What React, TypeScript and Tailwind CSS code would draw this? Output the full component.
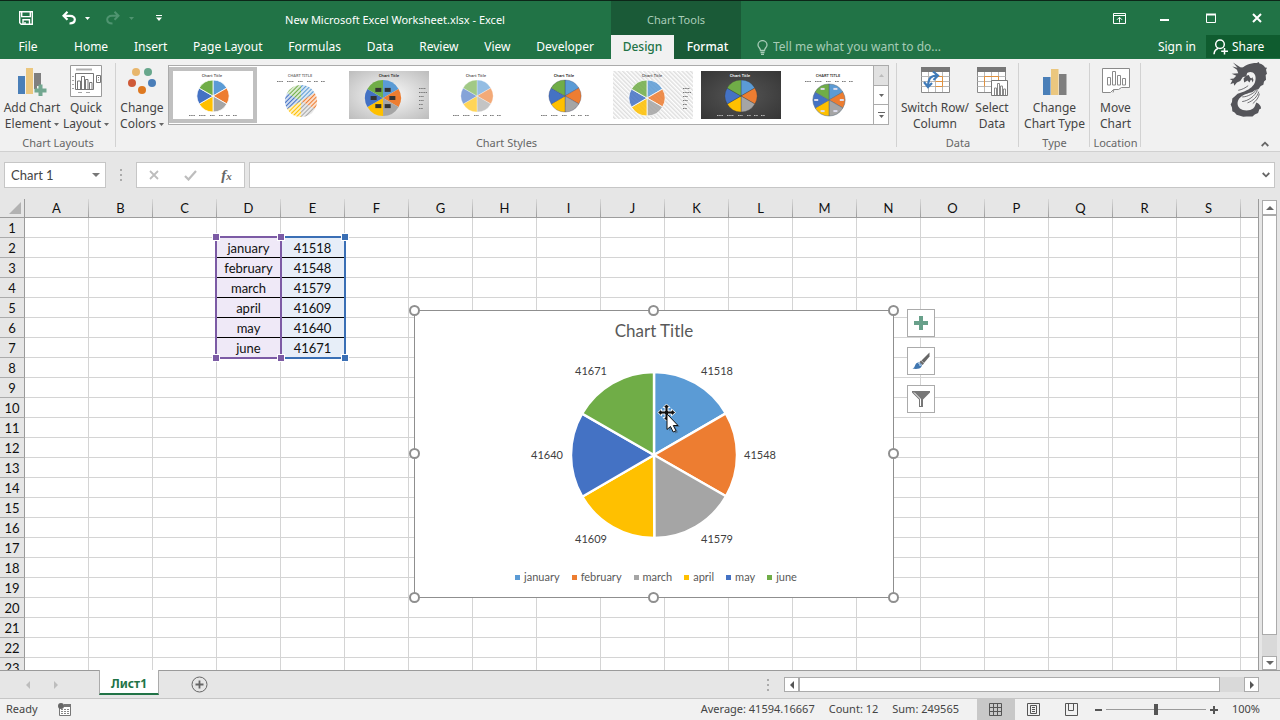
import React from 'react';
import clsx from 'clsx';

const columns = 'ABCDEFGHIJKLMNOPQRS'.split('');
const rows = Array.from({ length: 23 }, (_, i) => i + 1);

const data = [
  { month: 'january', value: 41518, color: '#5b9bd5' },
  { month: 'february', value: 41548, color: '#ed7d31' },
  { month: 'march', value: 41579, color: '#a5a5a5' },
  { month: 'april', value: 41609, color: '#ffc000' },
  { month: 'may', value: 41640, color: '#4472c4' },
  { month: 'june', value: 41671, color: '#70ad47' },
];

const tabs = ['Home', 'Insert', 'Page Layout', 'Formulas', 'Data', 'Review', 'View', 'Developer'];

// Slice path for one of the data points
const slicePath = (index: number, cx: number, cy: number, r: number) => {
  const total = data.reduce((sum, d) => sum + d.value, 0);
  const before = data.slice(0, index).reduce((sum, d) => sum + d.value, 0);
  const from = (before / total) * Math.PI * 2;
  const to = ((before + data[index].value) / total) * Math.PI * 2;
  const point = (a: number) => `${(cx + r * Math.sin(a)).toFixed(2)} ${(cy - r * Math.cos(a)).toFixed(2)}`;
  return `M${cx} ${cy}L${point(from)}A${r} ${r} 0 0 1 ${point(to)}Z`;
};

type PieProps = { cx: number; cy: number; r: number; gap: number; stroke?: string; opacity?: number; fills?: string[] };

const Pie: React.FC<PieProps> = ({ cx, cy, r, gap, stroke = '#fff', opacity = 1, fills }) => (
  <g opacity={opacity}>
    {data.map((d, i) => (
      <path key={d.month} d={slicePath(i, cx, cy, r)} fill={fills ? fills[i] : d.color} stroke={stroke} strokeWidth={gap} />
    ))}
  </g>
);

/* ---------- Title bar ---------- */

const Caret: React.FC<{ className?: string }> = ({ className }) => (
  <svg viewBox="0 0 5 3" className={clsx('w-[5px] h-[3px]', className)} aria-hidden="true">
    <path d="M0 0h5L2.500 3z" fill="currentColor" />
  </svg>
);

const TitleBar: React.FC = () => (
  <header className="flex h-[35px] border-t border-[#0c2618] bg-[#217346] text-white">
    <div className="flex w-[611px]">
      <div className="flex w-[179px] items-center pl-[19px]">
        <button aria-label="Save" className="mr-[29px]">
          <svg viewBox="0 0 14 14" className="w-3.5 h-3.5" fill="none" stroke="currentColor" strokeWidth="1.4">
            <path d="M.7.7h12.600v12.600H2.200L.7 11.800z" />
            <path d="M2.700 1v4.600h8.600V1M4 13V8.800h6.500V13M6 13v-2" />
          </svg>
        </button>
        <button aria-label="Undo" className="mr-[9px]">
          <svg viewBox="0 0 14 14" className="w-3.5 h-3.5" fill="none" stroke="currentColor" strokeWidth="2.200">
            <path d="M5.500.8 1.500 4.800l4 4M2 4.800h6c6.500 0 6.500 7.700-.5 7.700" />
          </svg>
        </button>
        <button aria-label="Undo history" className="mr-4">
          <Caret />
        </button>
        <button aria-label="Redo" className="mr-[9px] text-[#4f9470]">
          <svg viewBox="0 0 14 14" className="w-3.5 h-3.5" fill="none" stroke="currentColor" strokeWidth="2">
            <path d="M8.500.8l4 4-4 4M12 4.800H6c-6.500 0-6.500 7.700.5 7.700" />
          </svg>
        </button>
        <button aria-label="Redo history" className="mr-[22px] text-[#4f9470]">
          <Caret />
        </button>
        <button aria-label="Customize Quick Access Toolbar">
          <svg viewBox="0 0 6 6" className="w-1.5 h-1.5">
            <path d="M0 0h6v1H0zM0 2.500h6L3 6z" fill="currentColor" />
          </svg>
        </button>
      </div>
      <h1 className="flex-1 pt-1 text-center text-[11px] leading-[30px]">New Microsoft Excel Worksheet.xlsx - Excel</h1>
    </div>
    <div className="w-[130px] bg-[#1a5a37] pt-1 text-center text-[11px] leading-[30px] text-[#a9cdb9]">Chart Tools</div>
    <div className="ml-auto flex">
      <button aria-label="Ribbon Display Options" className="flex w-[46px] items-center justify-center">
        <svg viewBox="0 0 13 11" className="w-[13px] h-[11px]" fill="none" stroke="currentColor">
          <path d="M.5.5h12v10H.5zM.5 2.500h12M6.500 9.500V4.500M4 6.800l2.500-2.500L9 6.800" />
        </svg>
      </button>
      <button aria-label="Minimize" className="flex w-[46px] items-center justify-center">
        <svg viewBox="0 0 10 10" className="w-2.5 h-2.5"><path d="M0 6h9v2H0z" fill="currentColor" /></svg>
      </button>
      <button aria-label="Maximize" className="flex w-[46px] items-center justify-center">
        <svg viewBox="0 0 10 10" className="w-2.5 h-2.5"><path d="M.5 1.500h9v8h-9zM0 1h10M0 2h10" fill="none" stroke="currentColor" /></svg>
      </button>
      <button aria-label="Close" className="flex w-[46px] items-center justify-center">
        <svg viewBox="0 0 10 10" className="w-2.5 h-2.5"><path d="M1 1l8 8M9 1L1 9" stroke="currentColor" strokeWidth="2" /></svg>
      </button>
    </div>
  </header>
);

const TabBar: React.FC = () => (
  <nav className="flex h-6 bg-[#217346] text-xs text-white">
    <div className="flex w-[611px]">
      <button className="w-14">File</button>
      <div className="flex flex-1 justify-between pl-[18px] pr-[17px]">
        {tabs.map((tab) => (
          <button key={tab} className="whitespace-nowrap">{tab}</button>
        ))}
      </div>
    </div>
    <div className="flex w-[130px] bg-[#1a5a37]">
      <button className="w-[63px] bg-[#f1f1f1] font-medium text-[#217346]">Design</button>
      <button className="flex-1 font-medium">Format</button>
    </div>
    <label className="flex flex-1 items-center gap-[5px] pl-4 text-[#a6cbb6]">
      <svg viewBox="0 0 11 15" className="w-[11px] h-[15px]" fill="none" stroke="currentColor" strokeWidth="1.300">
        <path d="M3.500 10.500C3.500 8 1 7.500 1 4.900a4.500 4.300 0 0 1 9 0c0 2.600-2.500 3.100-2.500 5.600zM3.500 12.500h4M4 14.300h3" />
      </svg>
      <input aria-label="Tell me" placeholder="Tell me what you want to do..." className="w-52 bg-transparent outline-none placeholder:text-[#a6cbb6]" />
    </label>
    <button className="mr-2.5">Sign in</button>
    <button className="mb-px flex w-[74px] items-center gap-1 bg-[#0f5c2f] pl-[7px]">
      <svg viewBox="0 0 15 16" className="w-[15px] h-4" fill="none" stroke="currentColor" strokeWidth="1.500">
        <circle cx="7" cy="5.200" r="4.300" />
        <path d="M1 15.200c.3-3 2-5 4-5.700M11.500 9v6.500M8.200 12.300H15" />
      </svg>
      Share
    </button>
  </nav>
);

/* ---------- Ribbon ---------- */

const RibbonButton: React.FC<{ icon: React.ReactNode; lines: [string, string]; menu?: boolean; className?: string }> = ({
  icon,
  lines,
  menu,
  className,
}) => (
  <button className={clsx('flex flex-col items-center whitespace-nowrap text-xs leading-4 text-[#444]', className)}>
    <span className="mb-[3px] flex h-8 items-center">{icon}</span>
    <span>{lines[0]}</span>
    <span className="flex items-center gap-[3px]">
      {lines[1]}
      {menu && <Caret className="text-[#666]" />}
    </span>
  </button>
);

const RibbonGroup: React.FC<{ label: string; className?: string; children: React.ReactNode }> = ({ label, className, children }) => (
  <section className={clsx('relative flex flex-col', className)}>
    <div className="flex h-[76px] pt-1.5">{children}</div>
    <h2 className="text-center text-[11px] leading-4 text-[#666]">{label}</h2>
    <span className="absolute right-0 top-1 h-[84px] w-px bg-[#d2d2d2]" />
  </section>
);

const AddElementIcon = () => (
  <svg viewBox="0 0 30 30" className="w-[30px] h-[30px]">
    <path d="M1 10h7v18H1z" fill="#4a7fb8" />
    <path d="M9 2h7v26H9z" fill="#ebc77f" />
    <path d="M17 7h7v13h-4v3h-3z" fill="#7f7f7f" />
    <path d="M21.500 18.500h4v4h4v4h-4v4h-4v-4h-4v-4h4z" fill="#72a790" />
  </svg>
);

const QuickLayoutIcon = () => (
  <svg viewBox="0 0 32 32" className="w-8 h-8" fill="none" stroke="#777">
    <path d="M.5.5h31v31H.5z" fill="#fff" stroke="#9a9a9a" />
    <path d="M6 4.500h16" stroke="#b0b0b0" strokeWidth="2" />
    <path d="M5.500 8.500h18v16h-18zM7.500 24v-8h3v8M11.500 24V11.500h3V24M15.500 24V14.500h2.500V24M19.500 24v-6.500H22V24" />
    <path d="M26.500 10.500h4v7h-4zM28.500 12v1M28.500 14.500v1" />
    <path d="M2 11.500h2M2 15.500h2M2 19.500h2M2 23.500h2M8 27.500h4M16 27.500h4" stroke="#a5a5a5" />
  </svg>
);

const ColorsIcon = () => (
  <svg viewBox="0 0 30 28" className="w-[30px] h-7">
    <circle cx="9" cy="5" r="4" fill="#e8b66c" />
    <circle cx="21" cy="5" r="4" fill="#68a78c" />
    <circle cx="5" cy="16" r="4" fill="#cf5a38" />
    <circle cx="25" cy="16" r="4" fill="#4a7eb8" />
    <circle cx="15" cy="23" r="4" fill="#de7921" />
  </svg>
);

const SheetLines = () => (
  <>
    <path d="M.5 4.500h28v21H.5z" fill="#fff" stroke="#8a8a8a" />
    <path d="M0 0h29v5H0z" fill="#777" />
    <path d="M.5 9.500h28M.5 14.500h28M.5 19.500h28M7.500 5v20M14.500 5v20M21.500 5v20" stroke="#b9b9b9" fill="none" />
  </>
);

const SwitchIcon = () => (
  <svg viewBox="0 0 29 28" className="w-[29px] h-7">
    <SheetLines />
    <path d="M14.500 9.500h7v10h-7M14.500 14.500h7" fill="none" stroke="#e0913f" />
    <path d="M7 19C7.500 11 10 8.500 16 8.500M12 4.500l5 4-4.500 4.500M3 15l4 5 4-4" fill="none" stroke="#3f7ab8" strokeWidth="2.200" />
  </svg>
);

const SelectIcon = () => (
  <svg viewBox="0 0 31 29" className="w-[31px] h-[29px]">
    <SheetLines />
    <path d="M7.500 19.500v-10h14v4M7.500 9.500h14" fill="none" stroke="#e0913f" />
    <path d="M14.500 13.500h16v15h-16z" fill="#fff" stroke="#777" />
    <path d="M17.500 28v-7h2v7M20.500 28V16.500h2V28M23.500 28v-9h2v9M26.500 28v-6h2v6" fill="#fff" stroke="#888" />
  </svg>
);

const ChartTypeIcon = () => (
  <svg viewBox="0 0 24 27" className="w-6 h-[27px]">
    <path d="M0 9h7.500v18H0z" fill="#4a7fb8" />
    <path d="M8 1h7.500v26H8z" fill="#ebc77f" />
    <path d="M16 6h7.500v21H16z" fill="#7f7f7f" />
  </svg>
);

const MoveChartIcon = () => (
  <svg viewBox="0 0 28 26" className="w-7 h-[26px]">
    <path d="M.5 24.500V.5h27v19h-8l-3 2h-5l-3 3zM11 24.500l1-3" fill="#fff" stroke="#8a8a8a" />
    <path d="M5.500 17V9.500h3V17zM10.500 17V3.500h3V17zM15.500 17V7.500h3V17zM20.500 17v-6.500h3V17z" fill="#fff" stroke="#8a8a8a" />
  </svg>
);

const hatch = ['url(#h0)', 'url(#h1)', 'url(#h2)', 'url(#h3)', 'url(#h4)', 'url(#h5)'];

type Thumb = {
  title?: string;
  titleColor?: string;
  bg?: string;
  cx?: number;
  cy?: number;
  r?: number;
  gap?: number;
  stroke?: string;
  opacity?: number;
  fills?: string[];
  legend?: 'bottom' | 'top' | 'right';
  legendColor?: string;
  badges?: string;
};

const thumbs: Thumb[] = [
  {},
  { title: 'CHART TITLE', titleColor: '#777', cy: 30, gap: 0, fills: hatch, legend: 'top' },
  { titleColor: '#222', bg: 'url(#silver)', cx: 34, cy: 27, r: 18, gap: 0, legend: 'right', badges: '#333' },
  { opacity: 0.65, gap: 0.3 },
  { titleColor: '#111', gap: 0.3, stroke: '#335' },
  { bg: 'url(#stripes)', cx: 34, cy: 27, r: 18, opacity: 0.85, legend: 'right' },
  { titleColor: '#fff', bg: 'url(#dark)', gap: 0.3, stroke: '#333', legendColor: '#bbb' },
  { title: 'CHART TITLE', titleColor: '#333', cy: 29, gap: 0.5, stroke: '#567', legend: 'top', badges: '#dde' },
];

const legendDash = {
  bottom: 'M16 44.500h6M26 44.500h7M37 44.500h5M46 44.500h4M53 44.500h4M60 44.500h4',
  top: 'M16 10.500h6M26 10.500h7M37 10.500h5M46 10.500h4M53 10.500h4M60 10.500h4',
  right: 'M70 17.500h7M70 21.500h8M70 25.500h5M70 29.500h5M70 33.500h4M70 37.500h4',
};

const StyleThumb: React.FC<{ thumb: Thumb; index: number }> = ({ thumb, index }) => {
  const { title = 'Chart Title', titleColor = '#555', bg = '#fff', cx = 40, cy = 25, r = 16, gap = 0.8, legend = 'bottom' } = thumb;
  return (
    <button
      aria-label={`Style ${index + 1}`}
      className={clsx('h-14 w-[88px] border-4', index === 0 ? 'border-[#c0c0c0]' : 'border-transparent')}
    >
      <svg viewBox="0 0 80 48" className="h-12 w-20">
        <path d="M0 0h80v48H0z" fill={bg} />
        <Pie cx={cx} cy={cy} r={r} gap={gap} stroke={thumb.stroke} opacity={thumb.opacity} fills={thumb.fills} />
        {thumb.badges &&
          data.map((d, i) => {
            const a = ((i + 0.5) * Math.PI) / 3;
            const x = cx + r * (index === 7 ? 0.8 : 0.52) * Math.sin(a);
            const y = cy - r * (index === 7 ? 0.8 : 0.52) * Math.cos(a);
            return index === 7 ? (
              <rect key={d.month} x={x - 2} y={y - 1} width="4" height="2" fill={thumb.badges} />
            ) : (
              <rect key={d.month} x={x - 3} y={y - 2} width="6" height="4" fill={thumb.badges} />
            );
          })}
        <text x={cx === 34 && index === 2 ? 40 : 39} y="5.500" textAnchor="middle" fontSize="4" fontWeight="600" fill={titleColor}>
          {title}
        </text>
        <path d={legendDash[legend]} stroke={thumb.legendColor ?? '#777'} strokeDasharray="1.500 .7" fill="none" />
      </svg>
    </button>
  );
};

const ThumbDefs = () => (
  <svg className="absolute h-0 w-0" aria-hidden="true">
    <defs>
      {data.map((d, i) => (
        <pattern key={d.month} id={`h${i}`} width="3" height="3" patternUnits="userSpaceOnUse" patternTransform="rotate(45)">
          <path d="M0 0h3v3H0z" fill={d.color} opacity=".25" />
          <path d="M0 0h1v3H0z" fill={d.color} />
        </pattern>
      ))}
      <pattern id="stripes" width="3" height="3" patternUnits="userSpaceOnUse" patternTransform="rotate(-45)">
        <path d="M0 0h3v3H0z" fill="#fff" />
        <path d="M0 0h1.500v3H0z" fill="#dedede" />
      </pattern>
      <radialGradient id="silver" r=".7">
        <stop offset="0" stopColor="#fafafa" />
        <stop offset="1" stopColor="#bdbdbd" />
      </radialGradient>
      <radialGradient id="dark" r=".7">
        <stop offset="0" stopColor="#555" />
        <stop offset="1" stopColor="#363636" />
      </radialGradient>
    </defs>
  </svg>
);

const Dragon = () => (
  <svg viewBox="0 0 115 168" className="h-14 w-[38px]" fill="#55555a">
    {/* neck and body */}
    <path d="M34 26C46 12 62 5 84 5l6-3 2 5c8 2 14 6 17 12l6 1-3 6 3 12-4 4 1 14-6 5-2 10-8 4-7 10-10 2-8 6c-14 4-30 8-40 20-7 9-7 22 2 30 10 8 30 8 40 0 7-6 6-12 10-18 8 4 14 10 14 18l-5 2-4 12-10 4-7 6-18 0-10 1-20-6-6-7-7-4-1-11-4-9 4-8 1-10 8-7 8-8 16-5c16-6 30-14 36-28 5-13 3-26-6-31-8-4-18 0-24 6l-6 4z" />
    {/* head, horns and whiskers */}
    <path d="M12 4l22 14 14 2 8 12-4 14-10 2-8 12-10 4-8 10-2-8-10 4 6-12-8-4 12-2 8-8-14-6 20-2-4-10-14-10 16 4z" />
    <path d="M44 52l8-8 8-2 4 8 10 4-8 2-4 8-6-6-10 6zM70 48l4 8-2 8-4-8z" />
    {/* mane strokes */}
    <path
      d="M28 88c12-2 22-8 30-14M34 98c16-2 28-6 40-14M40 108c16 0 34-10 44-22M40 122c18-2 38-16 46-34M56 126c16-6 30-18 34-34M72 128c10-8 18-18 20-30"
      fill="none"
      stroke="#55555a"
      strokeWidth="2.500"
    />
  </svg>
);

const Ribbon: React.FC = () => (
  <div className="relative flex h-[92px] bg-[#f1f1f1]">
    <RibbonGroup label="Chart Layouts" className="w-[116px]">
      <RibbonButton icon={<AddElementIcon />} lines={['Add Chart', 'Element']} menu className="w-16" />
      <RibbonButton icon={<QuickLayoutIcon />} lines={['Quick', 'Layout']} menu className="w-11" />
    </RibbonGroup>
    <RibbonGroup label="Chart Styles" className="w-[781px]">
      <RibbonButton icon={<ColorsIcon />} lines={['Change', 'Colors']} menu className="w-[52px]" />
      <div className="flex h-[60px] w-[721px] border border-[#ababab] bg-white">
        <ThumbDefs />
        <div className="flex flex-1 items-center overflow-hidden">
          {thumbs.map((thumb, i) => (
            <StyleThumb key={i} thumb={thumb} index={i} />
          ))}
        </div>
        <div className="flex w-[15px] flex-col border-l border-[#ababab] text-[#666]">
          <button aria-label="Previous styles" className="flex flex-1 items-center justify-center bg-[#e1e1e1] text-[#bbb]">
            <Caret className="rotate-180" />
          </button>
          <button aria-label="Next styles" className="flex flex-1 items-center justify-center border-y border-[#ababab]">
            <Caret />
          </button>
          <button aria-label="More styles" className="flex flex-1 items-center justify-center">
            <svg viewBox="0 0 7 6" className="h-1.5 w-[7px]"><path d="M0 0h7v1H0zM1 3h5L3.500 6z" fill="currentColor" /></svg>
          </button>
        </div>
      </div>
    </RibbonGroup>
    <RibbonGroup label="Data" className="w-[122px]">
      <RibbonButton icon={<SwitchIcon />} lines={['Switch Row/', 'Column']} className="w-[76px]" />
      <RibbonButton icon={<SelectIcon />} lines={['Select', 'Data']} className="w-[38px]" />
    </RibbonGroup>
    <RibbonGroup label="Type" className="w-[71px]">
      <RibbonButton icon={<ChartTypeIcon />} lines={['Change', 'Chart Type']} className="w-full" />
    </RibbonGroup>
    <RibbonGroup label="Location" className="w-[51px]">
      <RibbonButton icon={<MoveChartIcon />} lines={['Move', 'Chart']} className="w-full" />
    </RibbonGroup>
    <div className="ml-auto mr-[13px] flex flex-col items-end justify-between pb-1 pt-0.5">
      <Dragon />
      <button aria-label="Collapse the Ribbon" className="-mr-0.5">
        <svg viewBox="0 0 8 6" className="h-1.5 w-2"><path d="M.7 5L4 1.700 7.300 5" fill="none" stroke="#666" strokeWidth="1.800" /></svg>
      </button>
    </div>
  </div>
);

/* ---------- Formula bar ---------- */

const Dots = () => (
  <span className="flex flex-col gap-[3px]">
    <i className="size-0.5 bg-[#ababab]" />
    <i className="size-0.5 bg-[#ababab]" />
    <i className="size-0.5 bg-[#ababab]" />
  </span>
);

const FormulaBar: React.FC = () => (
  <div className="flex h-12 items-start border-t border-[#d0d0d0] bg-[#e6e6e6] pl-1 pr-[5px] pt-2.5">
    <div className="flex h-[26px] w-[102px] items-center border border-[#c6c6c6] bg-white pr-[5px]">
      <input aria-label="Name Box" defaultValue="Chart 1" className="w-full min-w-0 pl-1.5 pt-0.5 font-[Lato,sans-serif] text-[13px] text-[#444] outline-none" />
      <button aria-label="Name list">
        <svg viewBox="0 0 8 4" className="h-1 w-2"><path d="M0 0h8L4 4z" fill="#777" /></svg>
      </button>
    </div>
    <div className="flex h-[26px] w-[30px] items-center justify-center">
      <Dots />
    </div>
    <div className="mr-1 flex h-[26px] w-[109px] items-center justify-around border border-[#c6c6c6] bg-white">
      <button aria-label="Cancel">
        <svg viewBox="0 0 10 10" className="size-2.5"><path d="M1 1l8 8M9 1L1 9" stroke="#bdbdbd" strokeWidth="1.800" /></svg>
      </button>
      <button aria-label="Enter">
        <svg viewBox="0 0 13 11" className="h-[11px] w-[13px]"><path d="M1 6l3.500 3.500L12 1" fill="none" stroke="#bdbdbd" strokeWidth="2.200" /></svg>
      </button>
      <button aria-label="Insert Function" className="font-['Liberation_Serif',serif] text-[15px] font-bold italic leading-5 text-[#666]">
        f<span className="text-[11px]">x</span>
      </button>
    </div>
    <div className="flex h-[26px] flex-1 items-center border border-[#c6c6c6] bg-white pr-1">
      <input aria-label="Formula Bar" className="min-w-0 flex-1 outline-none" />
      <button aria-label="Expand Formula Bar">
        <svg viewBox="0 0 8 6" className="h-1.5 w-2"><path d="M.7 1L4 4.300 7.300 1" fill="none" stroke="#666" strokeWidth="1.800" /></svg>
      </button>
    </div>
  </div>
);

/* ---------- Sheet ---------- */

const Grid: React.FC = () => (
  <table className="w-full table-fixed border-separate border-spacing-0 text-center text-[13px] leading-[17px] text-[#111]">
    <colgroup>
      <col className="w-[25px]" />
      {columns.map((c) => (
        <col key={c} className="w-16" />
      ))}
      <col />
    </colgroup>
    <thead>
      <tr className="h-[19px] bg-[#e6e6e6]">
        <th className="border-b border-r border-[#9b9b9b] p-0">
          <svg viewBox="0 0 12 12" className="ml-[9px] size-3"><path d="M12 0v12H0z" fill="#b2b2b2" /></svg>
        </th>
        {columns.map((c) => (
          <th key={c} scope="col" className="border-b border-r p-0 pt-px font-normal [border-image:linear-gradient(#dcdcdc,#9b9b9b)_1]">
            {c}
          </th>
        ))}
        <th className="border-b border-[#9b9b9b] p-0" />
      </tr>
    </thead>
    <tbody>
      {rows.map((row) => {
        const entry = data[row - 2];
        return (
          <tr key={row} className="h-5">
            <th scope="row" className="border-b border-r border-b-[#ababab] border-r-[#9b9b9b] bg-[#e6e6e6] p-0 pt-0.5 font-normal">
              {row}
            </th>
            {columns.map((c) => {
              const filled = entry && (c === 'D' || c === 'E');
              return (
                <td
                  key={c}
                  className={clsx(
                    'border-b border-r border-r-[#d4d4d4] p-0 pt-0.5',
                    filled && row < 7 ? 'border-b-black' : 'border-b-[#d4d4d4]',
                    filled && (c === 'D' ? 'bg-[#efe9f7]' : 'bg-[#e7eef8]'),
                  )}
                >
                  {filled ? (c === 'D' ? entry.month : entry.value) : null}
                </td>
              );
            })}
            <td className="border-b border-[#d4d4d4] p-0" />
          </tr>
        );
      })}
    </tbody>
  </table>
);

// Source range outlines: categories in purple, values in blue
const RangeOutlines = () => (
  <>
    <div className="absolute left-[280px] top-[37px] h-[123px] w-[66px] border-2 border-l-0 border-[#3a6fb5]">
      <i className="absolute -right-[5px] -top-[5px] box-content size-1.5 border border-white bg-[#3a6fb5]" />
      <i className="absolute -bottom-[5px] -right-[5px] box-content size-1.5 border border-white bg-[#3a6fb5]" />
    </div>
    <div className="absolute left-[215px] top-[37px] h-[123px] w-[67px] border-2 border-[#7c5ba5]">
      <i className="absolute -left-[5px] -top-[5px] box-content size-1.5 border border-white bg-[#7c5ba5]" />
      <i className="absolute -right-[5px] -top-[5px] box-content size-1.5 border border-white bg-[#7c5ba5]" />
      <i className="absolute -bottom-[5px] -left-[5px] box-content size-1.5 border border-white bg-[#7c5ba5]" />
      <i className="absolute -bottom-[5px] -right-[5px] box-content size-1.5 border border-white bg-[#7c5ba5]" />
    </div>
  </>
);

const handles = [
  '-left-1.5 -top-1.5',
  'left-[233px] -top-1.5',
  '-right-1.5 -top-1.5',
  '-left-1.5 top-[137px]',
  '-right-1.5 top-[137px]',
  '-left-1.5 -bottom-1.5',
  'left-[233px] -bottom-1.5',
  '-right-1.5 -bottom-1.5',
];

const labelSpots = [[193, 15], [236, 99], [193, 183], [67, 183], [23, 99], [67, 15]];

const ChartObject: React.FC = () => (
  <figure className="absolute left-[414px] top-[111px] flex h-[288px] w-[480px] flex-col items-center border border-[#8f8f8f] bg-white pt-2 text-[#595959]">
    <figcaption className="mb-[17px] text-[17px] leading-6">Chart Title</figcaption>
    <svg viewBox="0 0 260 190" className="h-[190px] w-[260px]" role="img" aria-label="Pie chart">
      <Pie cx={130} cy={95} r={83} gap={2.4} />
      {data.map((d, i) => (
        <text key={d.month} x={labelSpots[i][0]} y={labelSpots[i][1]} textAnchor="middle" fontSize="11" fill="#404040">
          {d.value}
        </text>
      ))}
    </svg>
    <ul className="mt-[18px] flex gap-3 pl-1 text-[11px] leading-[18px]">
      {data.map((d) => (
        <li key={d.month} className="flex items-center gap-1">
          <span className="size-[5px]" style={{ background: d.color }} />
          {d.month}
        </li>
      ))}
    </ul>
    {handles.map((pos) => (
      <span key={pos} className={clsx('absolute size-[11px] rounded-full border-2 border-[#8f8f8f] bg-white', pos)} />
    ))}
    <svg viewBox="0 0 24 32" className="absolute left-[242px] top-[92px] h-8 w-6" aria-hidden="true">
      <path
        d="M9.500 1l3.500 3.500h-2V8h3.500V6L18.500 9.500l-4 3.500v-2H11v3.500h2L9.500 18 6 14.500h2V11H4.500v2L.7 9.500 4.500 6v2H8V4.500H6z"
        fill="#111"
        stroke="#fff"
        strokeWidth=".9"
      />
      <path d="M12 13v15l3.500-3 2.700 5.500 2.800-1.300-2.700-5.200H23z" fill="#333" opacity=".35" />
      <path d="M10 11v15.500l3.500-3 2.700 5.500 2.800-1.300-2.700-5.200H21z" fill="#fff" stroke="#111" />
    </svg>
  </figure>
);

const ChartSideButtons = () => (
  <div className="absolute left-[907px] top-[110px] flex flex-col gap-2.5">
    <button aria-label="Chart Elements" className="flex size-7 items-center justify-center border border-[#ababab] bg-white">
      <svg viewBox="0 0 14 14" className="size-3.5"><path d="M5 0h4v5h5v4H9v5H5V9H0V5h5z" fill="#68a08a" /></svg>
    </button>
    <button aria-label="Chart Styles" className="flex size-7 items-center justify-center border border-[#ababab] bg-white">
      <svg viewBox="0 0 18 18" className="size-[18px]">
        <path d="M17.500.5v4L12 11l-2.500-2.500z" fill="#666" />
        <path d="M9 8.500l3 3-1.500 1.500-3-3z" fill="#666" />
        <path d="M.5 16.500c3-.5 2-5.500 5.500-6 2.500-.2 4.500 2 3.500 4-1.300 2.600-6 3-9 2z" fill="#3f76b0" />
        <path d="M6.500 11.500c1.500.2 2 1.200 1.500 2.500" fill="none" stroke="#fff" />
      </svg>
    </button>
    <button aria-label="Chart Filters" className="flex size-7 items-center justify-center border border-[#ababab] bg-white">
      <svg viewBox="0 0 18 16" className="h-4 w-[18px]">
        <path d="M0 0h18v1.500L11 8.500V16H7V8.500L0 1.500z" fill="#777" />
        <path d="M2 1.500l6.500 6.500V15" fill="none" stroke="#fff" />
      </svg>
    </button>
  </div>
);

const Arrow: React.FC<{ className?: string }> = ({ className }) => (
  <svg viewBox="0 0 8 4" className={clsx('h-1 w-2', className)} aria-hidden="true"><path d="M0 4h8L4 0z" fill="#666" /></svg>
);

const VerticalScroll = () => (
  <div className="ml-[3px] mr-[3px] flex w-[15px] flex-col bg-[#d9d9d9]">
    <div className="h-px bg-[#e6e6e6]" />
    <button aria-label="Scroll up" className="flex h-[15px] items-center justify-center border border-[#ababab] bg-white"><Arrow /></button>
    <div className="mb-[21px] flex-1 border border-[#ababab] bg-white" />
    <button aria-label="Scroll down" className="flex h-3.5 items-center justify-center border border-[#ababab] bg-white"><Arrow className="rotate-180" /></button>
  </div>
);

const Sheet: React.FC = () => (
  <main className="flex min-h-0 flex-1 bg-[#e6e6e6] font-[Lato,sans-serif]">
    <div className="relative flex-1 overflow-hidden border-r border-[#9b9b9b] bg-white">
      <Grid />
      <RangeOutlines />
      <ChartObject />
      <ChartSideButtons />
    </div>
    <VerticalScroll />
  </main>
);

/* ---------- Bottom bars ---------- */

const SheetTabs: React.FC = () => (
  <div className="flex h-7 items-start border-t border-[#9b9b9b] bg-[#e6e6e6]">
    <div className="flex h-[27px] w-[99px] items-center gap-6 pl-[26px]">
      <button aria-label="Previous sheet"><svg viewBox="0 0 4 8" className="h-2 w-1"><path d="M4 0v8L0 4z" fill="#bdbdbd" /></svg></button>
      <button aria-label="Next sheet"><svg viewBox="0 0 4 8" className="h-2 w-1"><path d="M0 0v8l4-4z" fill="#bdbdbd" /></svg></button>
    </div>
    <button className="-mt-px h-[25px] w-[60px] border-x border-b-2 border-x-[#ababab] border-b-[#217346] bg-white pt-1 text-xs font-bold leading-5 text-[#217346]">
      Лист1
    </button>
    <button aria-label="New sheet" className="ml-8 mt-[5px]">
      <svg viewBox="0 0 17 17" className="size-[17px]" fill="none" stroke="#666">
        <circle cx="8.500" cy="8.500" r="7.500" />
        <path d="M4.500 8.500h8M8.500 4.500v8" strokeWidth="1.800" />
      </svg>
    </button>
    <div className="ml-auto mr-[21px] flex w-[492px] items-center pt-1.5">
      <Dots />
      <div className="ml-[15px] flex h-[15px] flex-1 bg-[#d9d9d9]">
        <button aria-label="Scroll left" className="flex w-[15px] items-center justify-center border border-[#ababab] bg-white">
          <svg viewBox="0 0 4 8" className="h-2 w-1"><path d="M4 0v8L0 4z" fill="#555" /></svg>
        </button>
        <div className="mr-6 flex-1 border border-[#ababab] bg-white" />
        <button aria-label="Scroll right" className="flex w-[15px] items-center justify-center border border-[#ababab] bg-white">
          <svg viewBox="0 0 4 8" className="h-2 w-1"><path d="M0 0v8l4-4z" fill="#555" /></svg>
        </button>
      </div>
    </div>
  </div>
);

const StatusBar: React.FC = () => (
  <footer className="flex h-[22px] items-center border-t border-[#c6c6c6] bg-[#f1f1f1] pl-1.5 text-[11px] text-[#444]">
    <span>Ready</span>
    <button aria-label="Record macro" className="ml-5">
      <svg viewBox="0 0 13 13" className="size-[13px]">
        <path d="M1.500 5v7.500h11v-11H7" fill="#fff" stroke="#777" />
        <path d="M6 1h7v3H6z" fill="#777" />
        <circle cx="3" cy="3" r="3" fill="#666" />
        <path d="M3 6.500h8M3 8.500h8M3 10.500h8" stroke="#888" strokeDasharray="2 1" />
      </svg>
    </button>
    <div className="ml-auto flex gap-3.5 pr-[18px]">
      <span>Average: 41594.16667</span>
      <span>Count: 12</span>
      <span>Sum: 249565</span>
    </div>
    <button aria-label="Normal" className="flex h-full w-[38px] items-center justify-center bg-[#c8c8c8]">
      <svg viewBox="0 0 13 13" className="size-[13px]"><path d="M.5.5h12v12H.5zM4.500.5v12M8.500.5v12M.5 4.500h12M.5 8.500h12" fill="none" stroke="#555" /></svg>
    </button>
    <button aria-label="Page Layout" className="flex h-full w-[38px] items-center justify-center">
      <svg viewBox="0 0 13 13" className="size-[13px]"><path d="M.5.5h12v12H.5zM3.500 2.500h6v8h-6zM5 4.500h3M5 6.500h3M5 8.500h3" fill="none" stroke="#555" /></svg>
    </button>
    <button aria-label="Page Break Preview" className="flex h-full w-[38px] items-center justify-center">
      <svg viewBox="0 0 13 13" className="size-[13px]"><path d="M.5.500h12v12H.5zM3.500.5v7h5v-7" fill="none" stroke="#555" /></svg>
    </button>
    <button aria-label="Zoom out" className="ml-1 h-0.5 w-[7px] bg-[#555]" />
    <div className="relative mx-1 flex h-full w-[100px] items-center">
      <input type="range" aria-label="Zoom" min="10" max="190" defaultValue="100" className="h-px w-full appearance-none bg-[#9b9b9b] [&::-webkit-slider-thumb]:h-[11px] [&::-webkit-slider-thumb]:w-1 [&::-webkit-slider-thumb]:appearance-none [&::-webkit-slider-thumb]:bg-[#555]" />
    </div>
    <button aria-label="Zoom in">
      <svg viewBox="0 0 8 8" className="size-2"><path d="M0 4h8M4 0v8" stroke="#555" strokeWidth="2" /></svg>
    </button>
    <span className="ml-3.5 mr-5">100%</span>
  </footer>
);

const App: React.FC = () => (
  <div className="flex h-screen flex-col overflow-hidden font-['Noto_Sans',sans-serif]">
    <TitleBar />
    <TabBar />
    <Ribbon />
    <FormulaBar />
    <Sheet />
    <SheetTabs />
    <StatusBar />
  </div>
);

export default App;
